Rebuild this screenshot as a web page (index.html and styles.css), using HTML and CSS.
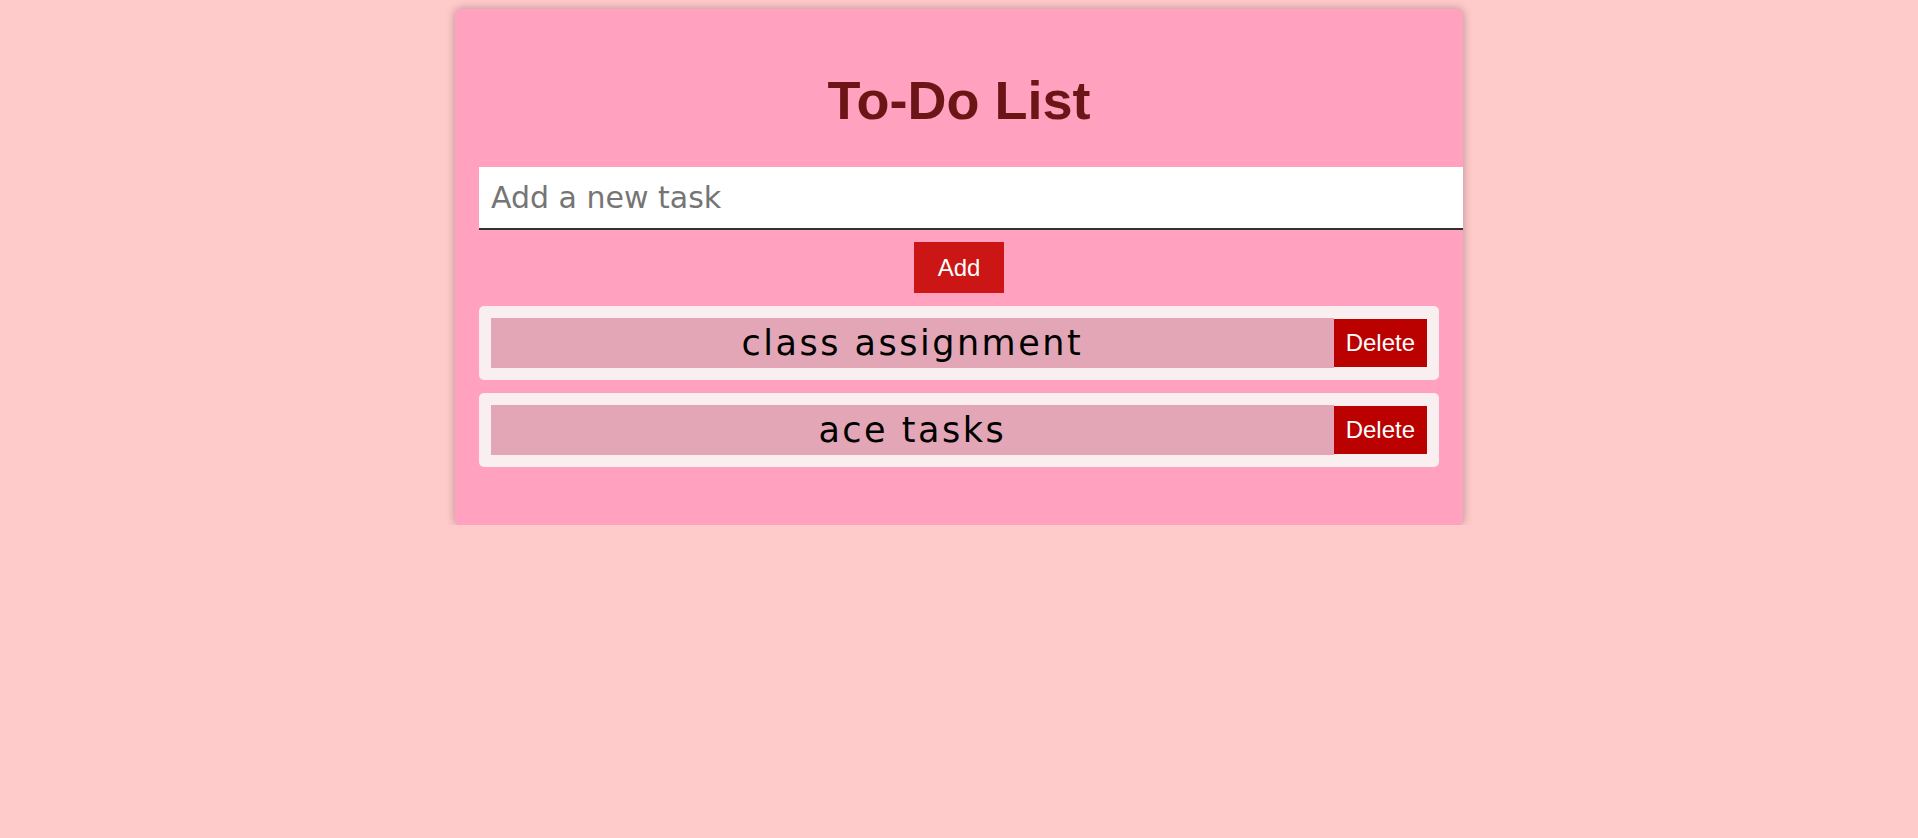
FILE: index.html
```html
<!DOCTYPE html>
<html lang="en">
<head>
<meta charset="utf-8">
<title>To-Do List</title>
<link rel="stylesheet" href="styles.css">
</head>
<body>
  <div class="container">
    <h1 class="title">To-Do List</h1>
    <input class="task-input" type="text" placeholder="Add a new task">
    <div class="add-row">
      <button class="add-btn">Add</button>
    </div>
    <ul class="task-list">
      <li class="task-item">
        <span class="task-text">class assignment</span>
        <button class="delete-btn">Delete</button>
      </li>
      <li class="task-item">
        <span class="task-text">ace tasks</span>
        <button class="delete-btn">Delete</button>
      </li>
    </ul>
  </div>
</body>
</html>
```

FILE: styles.css
```css
html, body {
  margin: 0;
  padding: 0;
}

body {
  background: #ffcaca;
  font-family: "Liberation Sans", Arial, sans-serif;
  padding-top: 9px;
}

.container {
  width: 960px;
  margin: 0 auto;
  padding: 24px;
  background: #ffa1bf;
  border-radius: 6px;
  box-shadow: 0 0 10px rgba(0, 0, 0, 0.3);
}

.title {
  margin: 37px 0 37px;
  font-family: "Liberation Sans", Arial, sans-serif;
  font-weight: bold;
  font-size: 54px;
  line-height: 60px;
  color: #6b1517;
  text-align: center;
}

.task-input {
  display: block;
  box-sizing: border-box;
  width: calc(100% + 24px);
  height: 63px;
  margin: 0;
  padding: 0 12px;
  border: none;
  border-bottom: 2px solid #333333;
  border-radius: 0;
  background: #ffffff;
  font-family: "DejaVu Sans", sans-serif;
  font-size: 30px;
  color: #222222;
  outline: none;
}

.task-input::placeholder {
  color: #757575;
}

.add-row {
  display: flex;
  justify-content: center;
  margin-top: 12px;
}

.add-btn {
  width: 90px;
  height: 51px;
  padding: 0;
  border: none;
  background: #cc1515;
  color: #ffffff;
  font-family: "Liberation Sans", Arial, sans-serif;
  font-size: 24px;
}

.task-list {
  list-style: none;
  margin: 13px 0 34px;
  padding: 0;
  display: flex;
  flex-direction: column;
  gap: 13px;
}

.task-item {
  display: flex;
  align-items: center;
  padding: 12px;
  background: #f9eef0;
  border-radius: 5px;
}

.task-text {
  flex: 1;
  height: 50px;
  line-height: 50px;
  background: #e3a6b6;
  text-align: center;
  font-family: "DejaVu Sans", sans-serif;
  font-size: 35px;
  letter-spacing: 2.5px;
  color: #000000;
}

.delete-btn {
  height: 48px;
  padding: 0 12px;
  border: none;
  background: #bb0000;
  color: #ffffff;
  font-family: "Liberation Sans", Arial, sans-serif;
  font-size: 24px;
}
```
